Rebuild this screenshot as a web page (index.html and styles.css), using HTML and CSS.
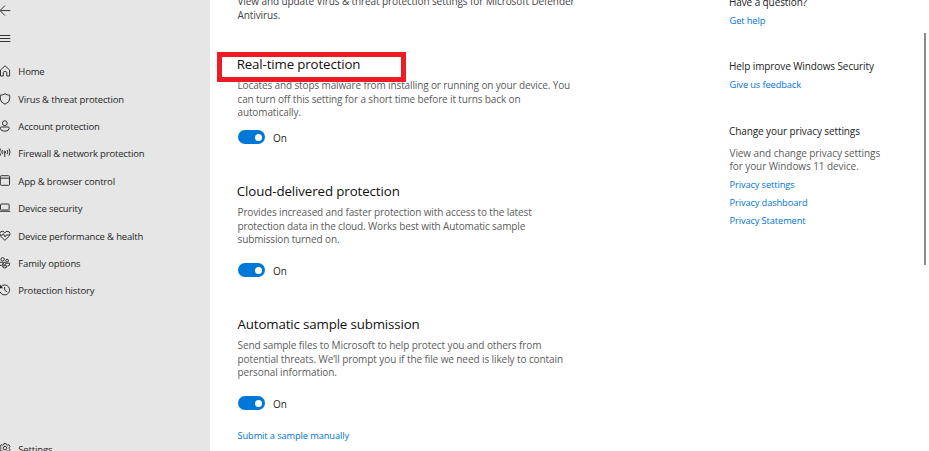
FILE: index.html
```html
<!DOCTYPE html>
<html lang="en">
<head>
<meta charset="utf-8">
<title>Windows Security</title>
<link rel="stylesheet" href="styles.css">
</head>
<body>
<div class="window">
  <nav class="sidebar">
    <div class="tool"><svg class="icon" viewBox="0 0 12 12"><path d="M10.3 5.6H.3M5 .6 0 5.6l5 5"/></svg></div>
    <div class="tool menu"><svg class="icon" viewBox="0 0 12 12"><path d="M0 2.5h10.3M0 5.5h10.3M0 8.5h10.3"/></svg></div>
    <ul class="nav">
      <li><svg class="icon" viewBox="0 0 12 12"><path d="M.5 11V5L5 .8 9.6 5v6H6.8V7.2Q5 5.4 3.3 7.2V11z"/></svg><span>Home</span></li>
      <li><svg class="icon" viewBox="0 0 12 12"><path d="M5 .7Q7 2.2 9.7 2.2V6Q9.5 9.3 5 11.2.5 9.3.3 6V2.2Q3 2.2 5 .7z"/></svg><span>Virus &amp; threat protection</span></li>
      <li><svg class="icon" viewBox="0 0 12 12"><circle cx="4.8" cy="3.2" r="2.4"/><path d="M1.3 7h7Q9.3 7 9.3 8.2 9 11.2 4.8 11.2T.3 8.2Q.3 7 1.3 7z"/></svg><span>Account protection</span></li>
      <li><svg class="icon" viewBox="0 0 12 12"><path d="M4.8 5.2V10M2.5 7.2Q1.3 5 2.5 3M7.2 7.2Q8.4 5 7.2 3M.6 8.6Q-1.4 5 .6 1.6M9 8.6Q11 5 9 1.6"/><circle cx="4.8" cy="5" r=".9"/></svg><span>Firewall &amp; network protection</span></li>
      <li><svg class="icon" viewBox="0 0 12 12"><rect x=".3" y=".7" width="9.2" height="9.6" rx="1"/><path d="M.3 3.2h9.2"/></svg><span>App &amp; browser control</span></li>
      <li><svg class="icon" viewBox="0 0 12 12"><rect x=".5" y="2" width="8.6" height="6" rx=".7"/><path d="M-1 9.3h11.3"/></svg><span>Device security</span></li>
      <li><svg class="icon" viewBox="0 0 12 12"><path d="M4.9 10.3.2 5.8Q-1 3 .6 1.8 3 .2 4.9 2.7 6.8.2 9.1 1.8 10.8 3.2 9.5 5.8zM0 5.2h2.3l1.1-1.5 1.6 3.2 1.3-1.9h3.4"/></svg><span>Device performance &amp; health</span></li>
      <li><svg class="icon" viewBox="0 0 12 12"><circle cx="2.6" cy="2.3" r="1.7"/><circle cx="7.1" cy="3.7" r="1.4"/><circle cx="4.6" cy="6.5" r="1.2"/><path d="M-1 5.3h4v2Q2 9-1 8.3M6 6.2h3.7Q10 9 7.6 9.2M2.6 8.8h4.2Q7 11 4.7 11T2.6 8.8z"/></svg><span>Family options</span></li>
      <li><svg class="icon" viewBox="0 0 12 12"><path d="M1 2.5A5 5 0 1 1 0 7.8M4.7 3v3.1l2.6 2"/><path class="solid" d="M0 .8v3.4h3.2z"/></svg><span>Protection history</span></li>
    </ul>
    <div class="settings"><svg class="icon" viewBox="0 0 12 12"><path d="M3.7 1.7 4 .5h2l.4 1.2 1.1.5 1.3-.5L10 3.3l-.8 1v1.3l.8 1.1-1.2 1.6-1.3-.4-1.1.6L6 9.7H4l-.4-1.2-1.2-.6-1.2.4L0 6.7l.8-1.1V4.3L0 3.3l1.2-1.6 1.3.5z"/><circle cx="5" cy="5.1" r="1.8"/></svg><span>Settings</span></div>
  </nav>

  <main class="content">
    <p class="text intro"><span>View and update Virus &amp; threat protection settings for Microsoft Defender</span><span>Antivirus.</span></p>

    <section class="setting realtime">
      <h2><span>Real-time protection</span></h2>
      <p class="text"><span>Locates and stops malware from installing or running on your device. You</span><span>can turn off this setting for a short time before it turns back on</span><span>automatically.</span></p>
      <div class="switch"><i class="toggle"></i><span>On</span></div>
      <div class="highlight"></div>
    </section>

    <section class="setting cloud">
      <h2><span>Cloud-delivered protection</span></h2>
      <p class="text"><span>Provides increased and faster protection with access to the latest</span><span>protection data in the cloud. Works best with Automatic sample</span><span>submission turned on.</span></p>
      <div class="switch"><i class="toggle"></i><span>On</span></div>
    </section>

    <section class="setting sample">
      <h2><span>Automatic sample submission</span></h2>
      <p class="text"><span>Send sample files to Microsoft to help protect you and others from</span><span>potential threats. We’ll prompt you if the file we need is likely to contain</span><span>personal information.</span></p>
      <div class="switch"><i class="toggle"></i><span>On</span></div>
      <a class="link"><span>Submit a sample manually</span></a>
    </section>
  </main>

  <aside class="help">
    <section class="question">
      <h3><span>Have a question?</span></h3>
      <a class="link"><span>Get help</span></a>
    </section>
    <section class="improve">
      <h3><span>Help improve Windows Security</span></h3>
      <a class="link"><span>Give us feedback</span></a>
    </section>
    <section class="privacy">
      <h3><span>Change your privacy settings</span></h3>
      <p class="text"><span>View and change privacy settings</span><span>for your Windows 11 device.</span></p>
      <a class="link"><span>Privacy settings</span></a>
      <a class="link"><span>Privacy dashboard</span></a>
      <a class="link"><span>Privacy Statement</span></a>
    </section>
  </aside>
  <div class="scroll"><div class="thumb"></div></div>
</div>
</body>
</html>
```
FILE: styles.css
```css
* { box-sizing: border-box; margin: 0; padding: 0; }
body { font-family: "Open Sans", "Noto Sans", sans-serif; font-size: 10px; color: #1f1f1f; background: #fff; overflow: hidden; }
.window { display: flex; width: 929px; height: 451px; overflow: hidden; }
.window span { white-space: nowrap; }

.sidebar { width: 210px; height: 451px; background: #e6e6e6; display: flex; flex-direction: column; overflow: hidden; flex: none; font-size: 9.5px; letter-spacing: -0.16px; }
.icon { width: 12px; height: 12px; fill: none; stroke: #333; stroke-width: 1; flex: none; display: block; }
.icon .solid { fill: #222; stroke: none; }
.tool { height: 22px; padding-top: 5px; flex: none; }
.menu { height: 36px; padding-top: 11px; }
.nav { list-style: none; }
.nav li, .settings { display: flex; align-items: center; height: 27.4px; gap: 6.3px; flex: none; }
.nav .icon, .settings .icon { margin-bottom: 1px; }
.settings { margin-top: 131px; }

.content { width: 519px; padding-left: 27.5px; flex: none; }
.text { color: #5c5c5c; font-size: 10px; line-height: 13.7px; letter-spacing: -0.13px; }
.text span { display: block; }
.intro { margin-top: -5px; color: #444; letter-spacing: -0.1px; }
.setting { position: relative; }
.realtime { margin-top: 32px; height: 127px; }
.cloud { height: 133px; }
.sample .text { letter-spacing: -0.09px; }
h2 { font-size: 13.3px; font-weight: 400; line-height: 20px; color: #111; margin-bottom: 4.5px; letter-spacing: -0.14px; }
.realtime h2, .cloud h2 { margin-left: -.8px; }
.cloud h2 { letter-spacing: -0.1px; }
.switch { display: flex; align-items: center; gap: 8px; height: 14px; }
.switch span { padding-top: 1px; }
.realtime .switch { margin-top: 10px; }
.cloud .switch { margin-top: 16px; }
.sample .switch { margin-top: 16px; }
.toggle { display: flex; justify-content: flex-end; align-items: center; width: 27.5px; height: 14px; border-radius: 7px; background: #0078d7; padding-right: 3px; }
.toggle::after { content: ""; width: 7px; height: 7px; border-radius: 50%; background: #fff; }
.link { display: block; color: #0074d4; font-size: 9.3px; line-height: 18px; letter-spacing: -0.12px; }
.sample .link { margin-top: 16.5px; }
.highlight { position: absolute; left: -20.5px; top: -2px; width: 189px; height: 30px; border: 5px solid #ed1c24; }

.help { width: 195px; flex: none; }
h3 { font-size: 10px; font-weight: 400; line-height: 16px; color: #222; letter-spacing: -0.1px; }
.question { margin-top: -6px; height: 64px; }
.question .link, .improve .link { margin-top: 2px; }
.improve { height: 65px; }
.privacy .text { margin: 7.5px 0 2px; letter-spacing: -0.08px; }
.help .link, .help .text { padding-left: .5px; }
.scroll { padding-top: 33px; }
.thumb { width: 2px; height: 232px; background: #8a8a8a; }
```
